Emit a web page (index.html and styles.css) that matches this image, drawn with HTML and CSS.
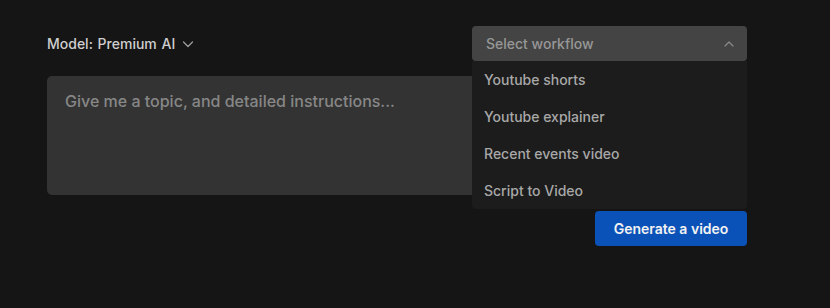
FILE: index.html
```html
<!DOCTYPE html>
<html lang="en">
  <head>
    <meta charset="UTF-8" />
    <meta name="viewport" content="width=device-width, initial-scale=1.0" />
    <title>Video Generator</title>
    <link rel="stylesheet" href="styles.css">
  </head>
  <body>
    <div class="container">
      <div class="top-row">
        <button class="model-button">
          Model: Premium AI
          <svg class="chevron" width="12" height="12" viewBox="0 0 12 12" fill="none">
            <path d="M1.5 4l4.5 4.5 4.5-4.5" stroke="currentColor" stroke-width="1.2" stroke-linecap="round" stroke-linejoin="round"/>
          </svg>
        </button>

        <div class="workflow-select">
          <button class="select-trigger">
            <span>Select workflow</span>
            <svg class="chevron" width="12" height="12" viewBox="0 0 12 12" fill="none">
              <path d="M2 8l4-4 4 4" stroke="currentColor" stroke-width="1.2" stroke-linecap="round" stroke-linejoin="round"/>
            </svg>
          </button>
          <!-- open menu -->
          <ul class="select-menu">
            <li>Youtube shorts</li>
            <li>Youtube explainer</li>
            <li>Recent events video</li>
            <li>Script to Video</li>
          </ul>
        </div>
      </div>

      <textarea class="prompt" placeholder="Give me a topic, and detailed instructions..."></textarea>

      <div class="actions">
        <button class="generate-button">Generate a video</button>
      </div>
    </div>
  </body>
</html>
```

FILE: styles.css
```css
* {
  margin: 0;
  padding: 0;
  box-sizing: border-box;
}

body {
  min-height: 100vh;
  background: #151515;
  color: #d0d0d0;
  font-family: Inter, "Noto Sans", sans-serif;
}

.container {
  width: 700px;
  margin-left: 47px;
  padding-top: 26px;
}

.top-row {
  display: flex;
  justify-content: space-between;
  align-items: center;
  height: 35px;
}

.model-button {
  display: flex;
  align-items: center;
  gap: 7px;
  background: none;
  border: none;
  color: #cfcfcf;
  font-family: inherit;
  font-size: 14px;
  font-weight: 500;
  word-spacing: 1px;
  cursor: pointer;
}

.model-button .chevron {
  color: #a0a0a0;
}

.workflow-select {
  position: relative;
  width: 275px;
  height: 35px;
}

.select-trigger {
  width: 100%;
  height: 100%;
  display: flex;
  justify-content: space-between;
  align-items: center;
  padding: 0 12px 0 14px;
  background: #444444;
  border: none;
  border-radius: 4px;
  color: #979797;
  font-family: inherit;
  font-size: 14px;
  font-weight: 500;
  cursor: pointer;
}

.select-trigger .chevron {
  color: #8a8a8a;
}

.select-menu {
  position: absolute;
  top: 35px;
  left: 0;
  width: 100%;
  list-style: none;
  background: #1c1c1c;
  border-radius: 0 0 4px 4px;
  padding: 0;
  z-index: 5;
}

.select-menu li {
  height: 37px;
  padding: 0 12px;
  display: flex;
  align-items: center;
  color: #a8a8a8;
  font-size: 14px;
  font-weight: 500;
  cursor: pointer;
}

.prompt {
  display: block;
  width: 100%;
  height: 119px;
  margin-top: 15px;
  padding: 15px 18px;
  background: #333333;
  border: none;
  border-radius: 5px;
  color: #e0e0e0;
  font-family: inherit;
  font-size: 16px;
  font-weight: 500;
  resize: none;
}

.prompt::placeholder {
  color: #878787;
}

.prompt:focus {
  outline: none;
}

.actions {
  display: flex;
  justify-content: flex-end;
  margin-top: 16px;
}

.generate-button {
  width: 152px;
  height: 35px;
  background: #0a52b8;
  border: none;
  border-radius: 4px;
  color: #f2f2f2;
  font-family: inherit;
  font-size: 14px;
  font-weight: 600;
  cursor: pointer;
}
```
